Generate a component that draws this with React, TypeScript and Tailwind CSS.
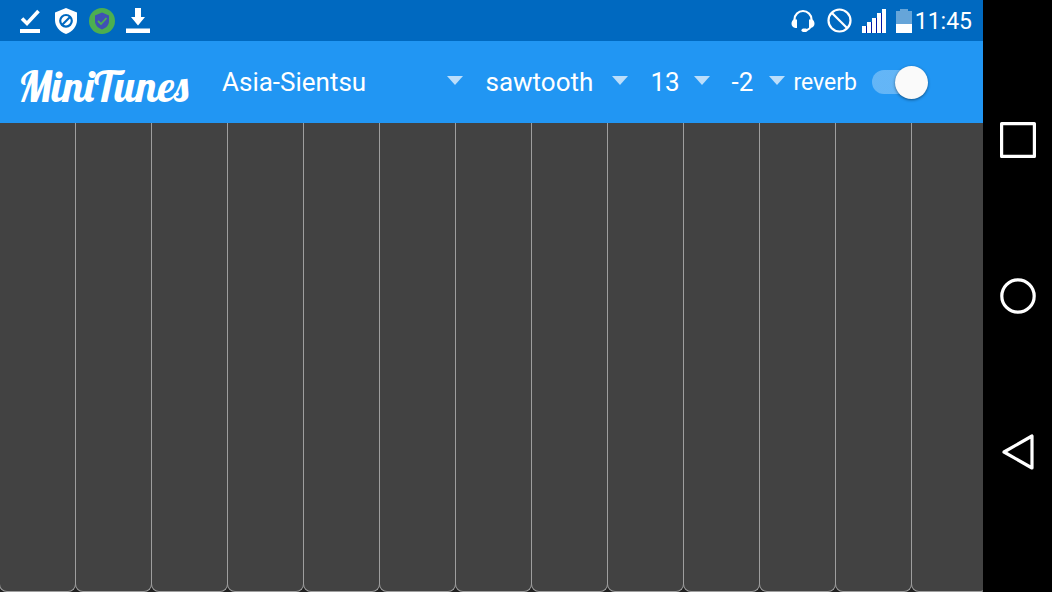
import { useState } from 'react'
import type { ReactNode } from 'react'
import { clsx } from 'clsx'

const KEY_COUNT = 13

const scales = ['Asia-Sientsu', 'Major', 'Minor', 'Pentatonic']
const waves = ['sawtooth', 'sine', 'square', 'triangle']
const noteCounts = ['13', '8', '10', '16']
const octaves = ['-2', '-1', '0', '1', '2']

function StatusBar() {
  return (
    <div className="flex h-[41px] shrink-0 items-center justify-between bg-[#0069c0] pl-5 pr-[11px] text-white">
      <div className="flex items-center">
        <svg className="mr-[14px] h-[26px] w-[21px]" viewBox="0 0 21 26" fill="none" stroke="currentColor">
          <path d="M2 10.5 7 15.5 18.5 3" strokeWidth="3.6" />
          <path d="M0 23H20" strokeWidth="4" />
        </svg>
        <svg className="mr-3 h-[26px] w-[22px]" viewBox="0 0 22 26">
          <path d="M11 0 22 4.5V12c0 6.4-4.4 11.6-11 14C4.4 23.6 0 18.4 0 12V4.5z" fill="currentColor" />
          <g fill="none" stroke="#0069c0" strokeWidth="2.2">
            <circle cx="11" cy="12.8" r="5.8" />
            <path d="M7 17 15 9" />
          </g>
        </svg>
        <svg className="mr-[11px] h-[26px] w-[26px]" viewBox="0 0 26 26">
          <circle cx="13" cy="13" r="13" fill="#4caf50" />
          <path d="M13 4.5 20 7.5V13c0 4-2.8 7-7 8.5C8.8 20 6 17 6 13V7.5z" fill="#3f51b5" />
          <path d="M9 13 12 16 17.5 10" fill="none" stroke="#4caf50" strokeWidth="1.8" />
        </svg>
        <svg className="h-[26px] w-6" viewBox="0 0 24 26" fill="currentColor">
          <path d="M9 0H15V9H19L12 17.5 5 9H9zM0 20.5H24V25H0z" />
        </svg>
      </div>
      <div className="flex items-center">
        <svg className="mr-3 h-6 w-6" viewBox="0 0 24 24">
          <path d="M3.5 12V10.5a8.5 8.5 0 0 1 17 0V12" fill="none" stroke="currentColor" strokeWidth="2.2" />
          <path
            d="M3 10.5H6V19H4.5C2 18.5 .5 16.7 .5 14.7S1.5 11 3 10.5zM21 10.5H18V19H19.5C22 18.5 23.5 16.7 23.5 14.7S22.5 11 21 10.5z"
            fill="currentColor"
          />
          <path d="M19.5 17.5C19 20 17 21 14 21.3" fill="none" stroke="currentColor" strokeWidth="1.8" />
          <rect x="10.5" y="19.5" width="6" height="3.6" rx="1.8" fill="currentColor" />
        </svg>
        <svg className="mr-[10px] h-[25px] w-[25px]" viewBox="0 0 25 25" fill="none" stroke="currentColor" strokeWidth="2.2">
          <circle cx="12.5" cy="12.5" r="11" />
          <path d="M4.7 4.7 20.3 20.3" />
        </svg>
        <svg className="mr-[10px] h-6 w-6" viewBox="0 0 24 24" fill="currentColor">
          <path d="M0 17H4V24H0zM5 13H9V24H5zM10 9H14V24H10zM15 4H19V24H15zM20 0H24V24H20z" />
          <path d="M4 17H5V24H4zM9 13H10V24H9zM14 9H15V24H14zM19 4H20V24H19z" fill="#0018a8" />
        </svg>
        <svg className="mr-[3px] h-6 w-4" viewBox="0 0 16 24">
          <path d="M4 0H12V2H16V15H0V2H4z" fill="#66a5d9" />
          <path d="M0 15H16V24H0z" fill="currentColor" />
        </svg>
        <time className="pt-[2px] text-[23px] leading-6">11:45</time>
      </div>
    </div>
  )
}

interface SpinnerProps {
  label: string
  options: string[]
  className?: string
}

function Spinner({ label, options, className }: SpinnerProps) {
  return (
    <div className={clsx('relative', className)}>
      <select
        aria-label={label}
        className="block h-10 w-full appearance-none bg-transparent pr-5 text-[26px] leading-10 text-white outline-none"
      >
        {options.map((option) => (
          <option key={option} className="text-black">
            {option}
          </option>
        ))}
      </select>
      <svg
        className="pointer-events-none absolute right-0 top-[14px] h-[9px] w-4 text-[#bbdefb]"
        viewBox="0 0 16 9"
        fill="currentColor"
      >
        <path d="M0 0H16L8 9z" />
      </svg>
    </div>
  )
}

function ReverbSwitch() {
  const [on, setOn] = useState(true)

  return (
    <label className="ml-2 flex shrink-0 items-center gap-[15px]">
      <span className="pt-[2px] text-[23px] leading-8">reverb</span>
      <input
        type="checkbox"
        role="switch"
        checked={on}
        onChange={(e) => setOn(e.target.checked)}
        className="sr-only"
      />
      <span
        className={clsx(
          'flex h-6 w-[56px] items-center rounded-full bg-linear-to-r from-white/30 to-white/30 bg-[length:48px_24px] bg-no-repeat',
          on ? 'justify-end' : 'justify-start',
        )}
      >
        <span className="size-[33px] shrink-0 rounded-full bg-[#fafafa] shadow-[0_1px_3px_rgba(0,0,0,0.45)]" />
      </span>
    </label>
  )
}

function Toolbar() {
  return (
    <header className="flex h-[82px] shrink-0 items-center bg-[#2196f3] pl-[18px] pr-[55px] text-white">
      <h1 className="mr-[34px] w-[170px] shrink-0 pt-2 font-[Lobster,'Liberation_Serif',serif] text-[43px] leading-10">
        MiniTunes
      </h1>
      <Spinner label="Scale" options={scales} className="min-w-0 flex-1" />
      <Spinner label="Waveform" options={waves} className="ml-[22px] w-[143px]" />
      <Spinner label="Number of notes" options={noteCounts} className="ml-[22px] w-[60px]" />
      <Spinner label="Octave" options={octaves} className="ml-[21px] w-[54px]" />
      <ReverbSwitch />
    </header>
  )
}

// Keys overlap by one pixel so neighbours share a border
function Keyboard() {
  return (
    <main className="flex grow overflow-hidden bg-[#212121]">
      {Array.from({ length: KEY_COUNT }, (_, i) => (
        <button
          key={i}
          type="button"
          aria-label={`Note ${i + 1}`}
          className="-ml-px w-[77px] shrink-0 rounded-b-lg border border-t-0 border-[#9e9e9e] bg-[#424242] active:bg-[#616161]"
        />
      ))}
    </main>
  )
}

function NavButton({ label, children }: { label: string; children: ReactNode }) {
  return (
    <button type="button" aria-label={label} className="text-white">
      <svg className="size-9" viewBox="0 0 36 36" fill="none" stroke="currentColor" strokeWidth="3.2">
        {children}
      </svg>
    </button>
  )
}

function NavBar() {
  return (
    <nav className="flex w-[69px] shrink-0 flex-col items-center justify-center gap-[120px] bg-black">
      <NavButton label="Recent apps">
        <rect x="1.6" y="1.6" width="32.8" height="32.8" strokeLinejoin="round" />
      </NavButton>
      <NavButton label="Home">
        <circle cx="18" cy="18" r="16.2" />
      </NavButton>
      <NavButton label="Back">
        <path d="M32 2V34L4 18z" strokeLinejoin="round" />
      </NavButton>
    </nav>
  )
}

export default function App() {
  return (
    <div className="flex min-h-screen bg-black font-[Roboto,sans-serif]">
      <div className="flex min-w-0 flex-1 flex-col">
        <StatusBar />
        <Toolbar />
        <Keyboard />
      </div>
      <NavBar />
    </div>
  )
}
